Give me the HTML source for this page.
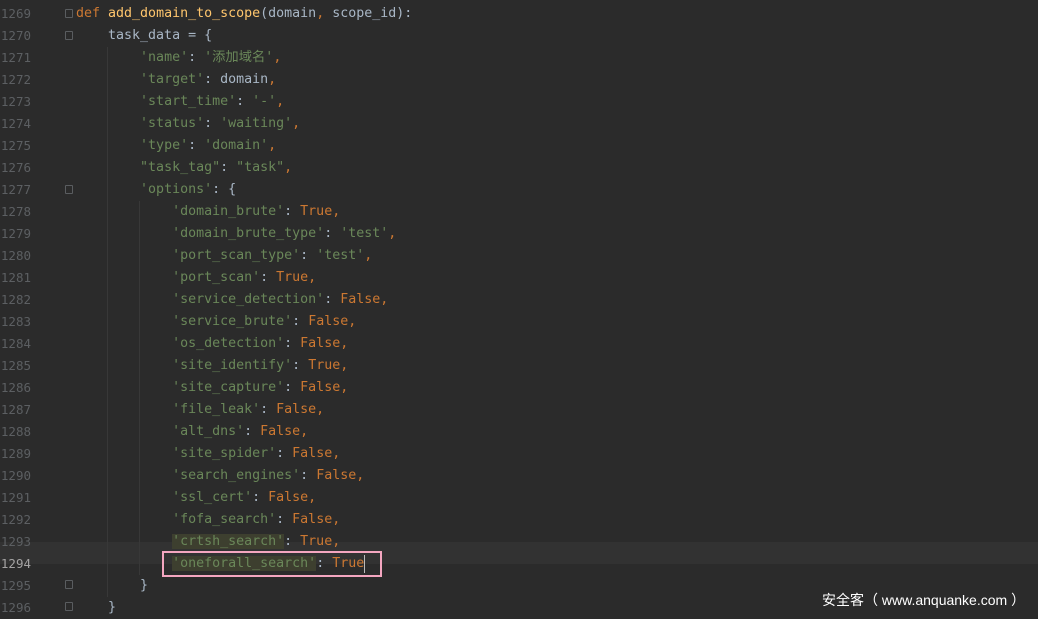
<!DOCTYPE html><html><head><meta charset="utf-8"><style>
body{margin:0;width:1038px;height:619px;background:#2b2b2b;overflow:hidden;position:relative;font-family:"DejaVu Sans Mono","Noto Sans CJK SC",monospace;font-size:13.3px;}
.l{position:absolute;left:0;width:1038px;height:22px;line-height:22px;color:#a9b7c6;white-space:pre}
.n{position:absolute;left:0;width:31px;text-align:right;color:#5c5f62;font-size:12.5px}
.c{position:absolute;left:76px}
.k{color:#cc7832}.f{color:#ffc66d}.s{color:#6a8759}.h{background:#3d3f2f}
.g{position:absolute;width:1px;background:#383838}
.fold{position:absolute;left:65px;width:8px;height:9px;border:1px solid #5a5d60;box-sizing:border-box;border-radius:1px}
</style></head><body>
<div class="l" style="top:542px;background:#323232"></div>
<div class="g" style="left:107px;top:47px;height:550px"></div>
<div class="g" style="left:139px;top:201px;height:374px"></div>
<div style="position:absolute;left:0;top:1px">
<div class="l" style="top:2px"><span class="n">1269</span><span class="c"><span class="k">def </span><span class="f">add_domain_to_scope</span>(domain<span class="k">, </span>scope_id):</span></div>
<div class="l" style="top:24px"><span class="n">1270</span><span class="c">    task_data = {</span></div>
<div class="l" style="top:46px"><span class="n">1271</span><span class="c">        <span class="s">'name'</span>: <span class="s">'添加域名'</span><span class="k">,</span></span></div>
<div class="l" style="top:68px"><span class="n">1272</span><span class="c">        <span class="s">'target'</span>: domain<span class="k">,</span></span></div>
<div class="l" style="top:90px"><span class="n">1273</span><span class="c">        <span class="s">'start_time'</span>: <span class="s">'-'</span><span class="k">,</span></span></div>
<div class="l" style="top:112px"><span class="n">1274</span><span class="c">        <span class="s">'status'</span>: <span class="s">'waiting'</span><span class="k">,</span></span></div>
<div class="l" style="top:134px"><span class="n">1275</span><span class="c">        <span class="s">'type'</span>: <span class="s">'domain'</span><span class="k">,</span></span></div>
<div class="l" style="top:156px"><span class="n">1276</span><span class="c">        <span class="s">"task_tag"</span>: <span class="s">"task"</span><span class="k">,</span></span></div>
<div class="l" style="top:178px"><span class="n">1277</span><span class="c">        <span class="s">'options'</span>: {</span></div>
<div class="l" style="top:200px"><span class="n">1278</span><span class="c">            <span class="s">'domain_brute'</span>: <span class="k">True,</span></span></div>
<div class="l" style="top:222px"><span class="n">1279</span><span class="c">            <span class="s">'domain_brute_type'</span>: <span class="s">'test'</span><span class="k">,</span></span></div>
<div class="l" style="top:244px"><span class="n">1280</span><span class="c">            <span class="s">'port_scan_type'</span>: <span class="s">'test'</span><span class="k">,</span></span></div>
<div class="l" style="top:266px"><span class="n">1281</span><span class="c">            <span class="s">'port_scan'</span>: <span class="k">True,</span></span></div>
<div class="l" style="top:288px"><span class="n">1282</span><span class="c">            <span class="s">'service_detection'</span>: <span class="k">False,</span></span></div>
<div class="l" style="top:310px"><span class="n">1283</span><span class="c">            <span class="s">'service_brute'</span>: <span class="k">False,</span></span></div>
<div class="l" style="top:332px"><span class="n">1284</span><span class="c">            <span class="s">'os_detection'</span>: <span class="k">False,</span></span></div>
<div class="l" style="top:354px"><span class="n">1285</span><span class="c">            <span class="s">'site_identify'</span>: <span class="k">True,</span></span></div>
<div class="l" style="top:376px"><span class="n">1286</span><span class="c">            <span class="s">'site_capture'</span>: <span class="k">False,</span></span></div>
<div class="l" style="top:398px"><span class="n">1287</span><span class="c">            <span class="s">'file_leak'</span>: <span class="k">False,</span></span></div>
<div class="l" style="top:420px"><span class="n">1288</span><span class="c">            <span class="s">'alt_dns'</span>: <span class="k">False,</span></span></div>
<div class="l" style="top:442px"><span class="n">1289</span><span class="c">            <span class="s">'site_spider'</span>: <span class="k">False,</span></span></div>
<div class="l" style="top:464px"><span class="n">1290</span><span class="c">            <span class="s">'search_engines'</span>: <span class="k">False,</span></span></div>
<div class="l" style="top:486px"><span class="n">1291</span><span class="c">            <span class="s">'ssl_cert'</span>: <span class="k">False,</span></span></div>
<div class="l" style="top:508px"><span class="n">1292</span><span class="c">            <span class="s">'fofa_search'</span>: <span class="k">False,</span></span></div>
<div class="l" style="top:530px"><span class="n">1293</span><span class="c">            <span class="s h">'crtsh_search'</span>: <span class="k">True,</span></span></div>
<div class="l" style="top:552px"><span class="n" style="color:#a4a3a3">1294</span><span class="c">            <span class="s h">'oneforall_search'</span>: <span class="k">True</span></span></div>
<div class="l" style="top:574px"><span class="n">1295</span><span class="c">        }</span></div>
<div class="l" style="top:596px"><span class="n">1296</span><span class="c">    }</span></div>
</div>
<div class="fold" style="top:9px"></div><div class="fold" style="top:31px"></div><div class="fold" style="top:185px"></div><div class="fold" style="top:580px"></div><div class="fold" style="top:602px"></div>
<div style="position:absolute;left:364px;top:555px;width:1px;height:18px;background:#bbb"></div>
<div style="position:absolute;left:162px;top:551px;width:220px;height:26px;border:2px solid #f4a6c0;box-sizing:border-box"></div>
<div style="position:absolute;left:822px;top:590px;color:#fff;font-family:'Liberation Sans','Noto Sans CJK SC',sans-serif;font-size:14px;line-height:20px;white-space:nowrap">安全客（ www.anquanke.com ）</div>
</body></html>
